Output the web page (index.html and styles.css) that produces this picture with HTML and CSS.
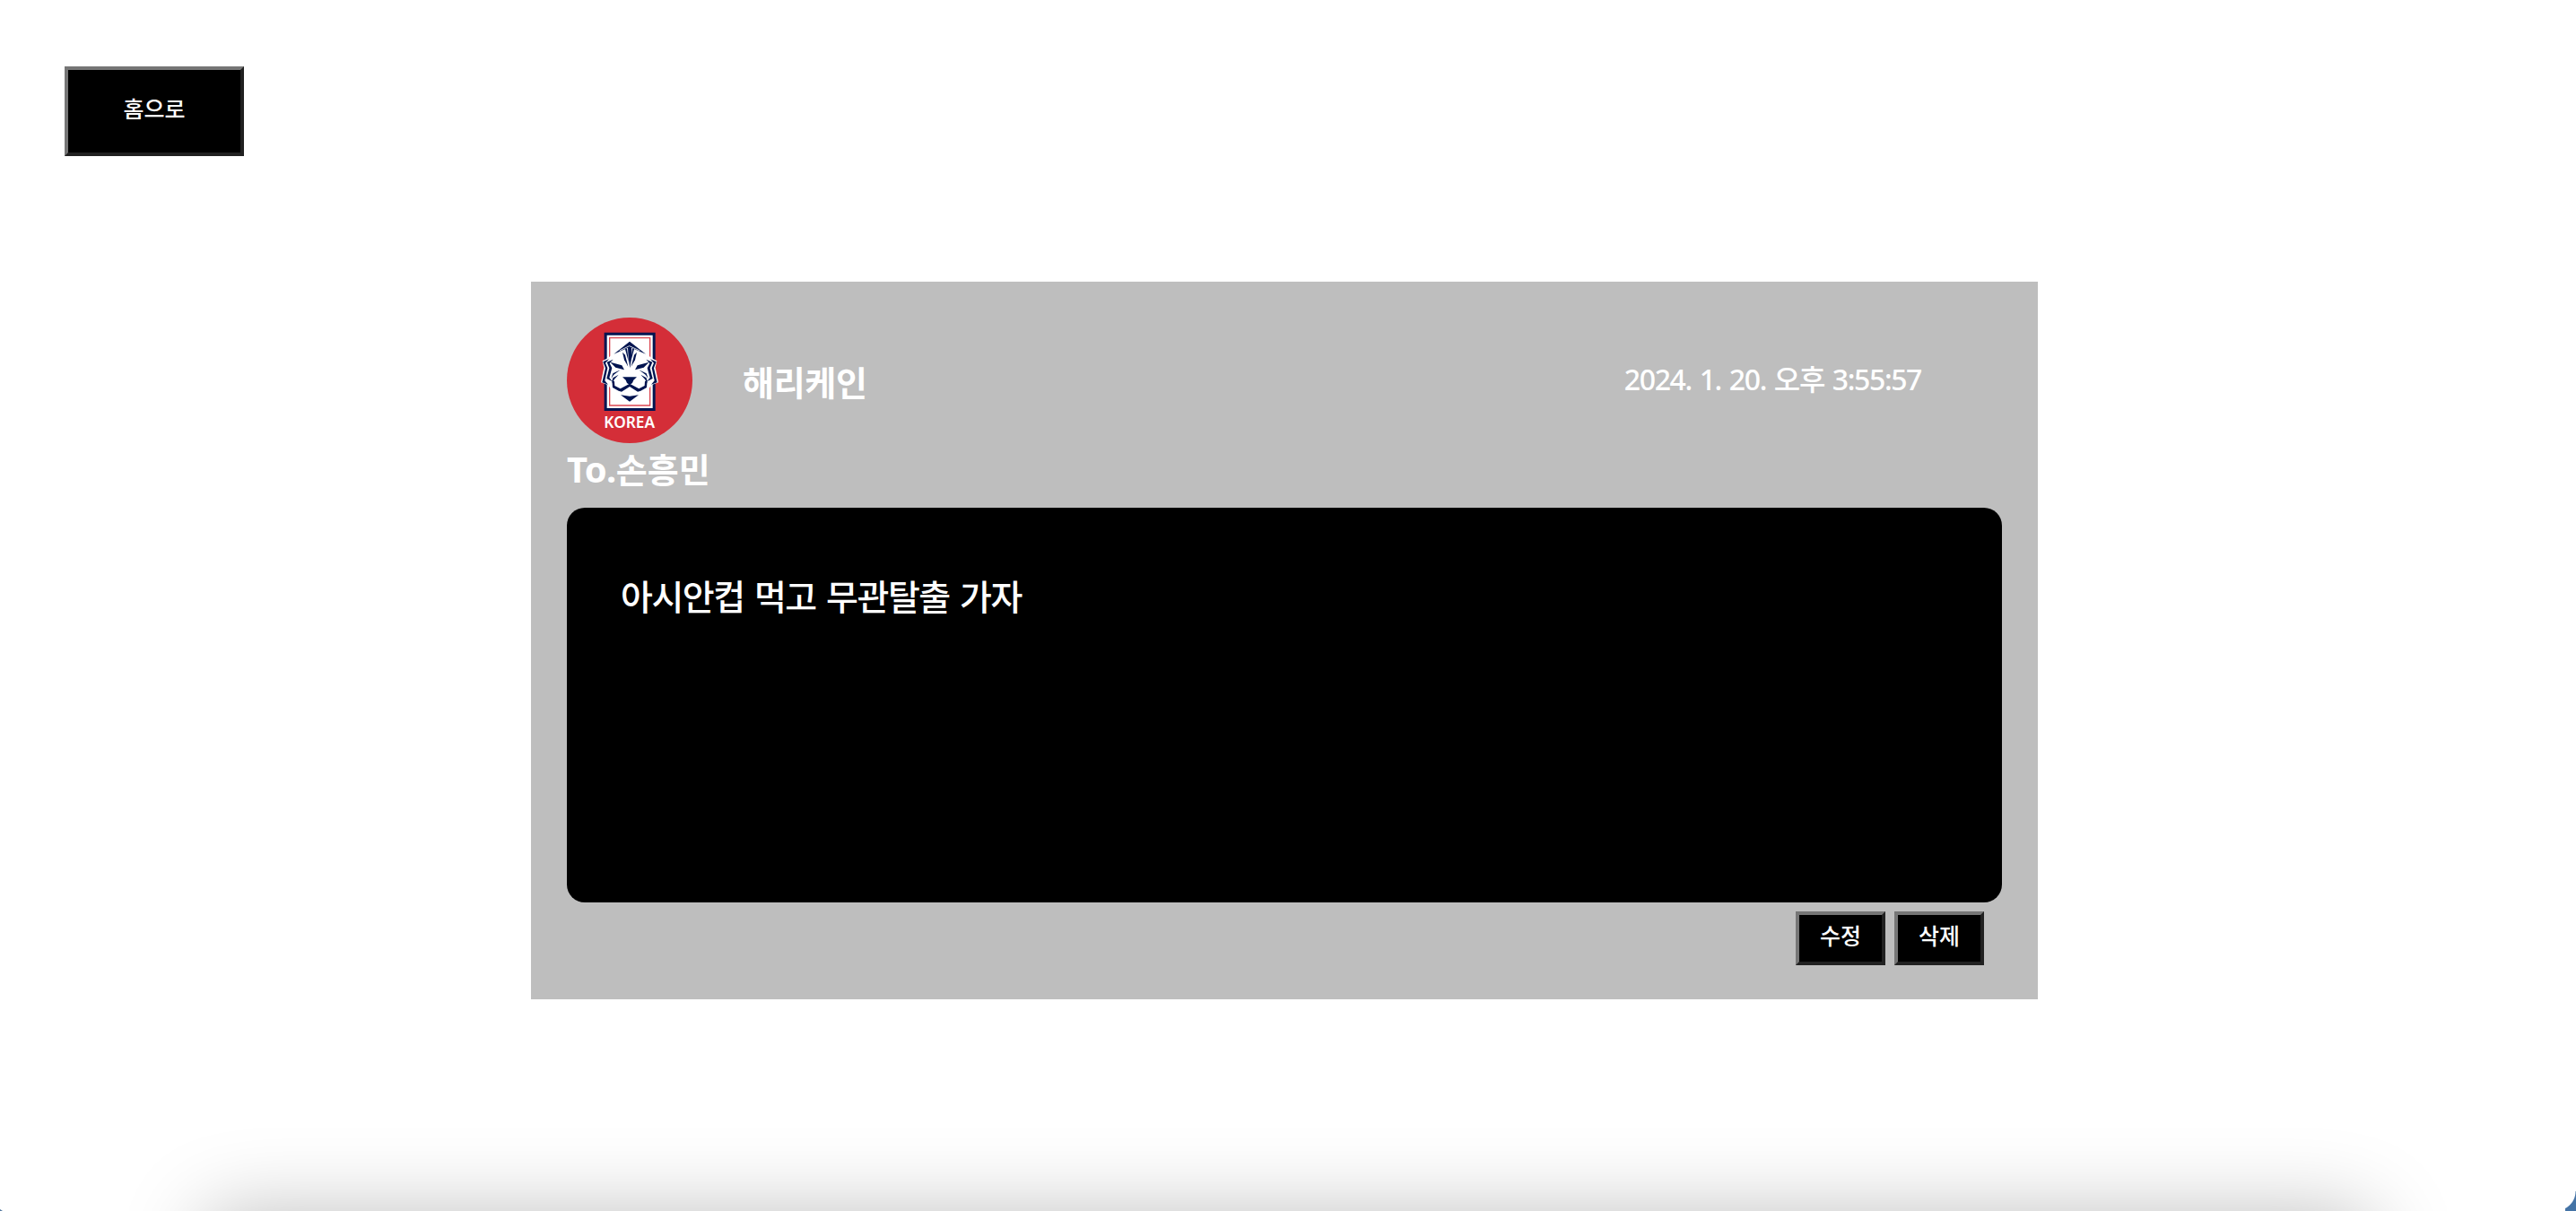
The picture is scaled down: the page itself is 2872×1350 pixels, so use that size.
FILE: index.html
```html
<!DOCTYPE html>
<html lang="ko">
<head>
<meta charset="utf-8">
<title>팬레터</title>
<link rel="stylesheet" href="styles.css">
</head>
<body>
<header class="top"><button class="btn btn-home">홈으로</button></header>
<main class="letter">
  <div class="letter-head">
    <svg class="avatar" viewBox="36 42 420 420">
      <circle cx="246" cy="252" r="210" fill="#d42e38"/>
      <path fill="#001450" d="M161 92H332V354H161z"/>
      <path fill="#fff" d="M170 101H323V345H170z"/>
      <path fill="none" stroke="#dc4650" stroke-width="4" d="M179 110H314V336H179z"/>
      <path fill="#fff" d="M246 117L298 160L319 177L337 187L332 209L342 259L319 268L303 290L246 329L190 290L174 268L150 259L160 209L155 187L174 177L194 160z"/>
      <g fill="#001450">
        <path d="M246 122L193 164L240 143L242 177L247 211L252 177L252 143L300 164z"/>
        <path fill="none" stroke="#fff" stroke-width="2.5" d="M212 153L245 137L280 153"/>
        <g id="half-face">
          <path d="M222 158L231 167L241 206L228 184z"/>
          <path d="M231 148L237 145L243 192z"/>
          <path d="M181 191L220 202L228 217L199 209z"/>
          <path d="M177 181L157 190L165 211L154 259L174 266L163 253L172 211L165 194z"/>
          <path d="M191 182L170 191L178 211L169 246L188 256L178 243L187 211L179 195z"/>
          <path d="M215 217L190 229L184 246L193 233zM209 233L190 244L187 262L195 248z"/>
          <path d="M222 241H246V267L237 261L233 251z"/>
          <path d="M187 250L195 256L196 270L215 280L246 263V273L219 290L209 287L189 276z"/>
          <path d="M216 301L246 305V323z"/>
        </g>
        <use href="#half-face" transform="matrix(-1 0 0 1 492 0)"/>
      </g>
      <text class="crest-name" x="160" y="411" textLength="170" lengthAdjust="spacingAndGlyphs">KOREA</text>
    </svg>
    <h2 class="sender">해리케인</h2>
    <time class="date">2024. 1. 20. 오후 3:55:57</time>
  </div>
  <h2 class="recipient">To.<span class="recipient-name">손흥민</span></h2>
  <p class="message">아시안컵 먹고 무관탈출 가자</p>
  <div class="actions">
    <button class="btn">수정</button>
    <button class="btn">삭제</button>
  </div>
</main>
<div class="bottom-edge">
  <div class="bottom-shade"></div>
  <div class="corner-left"></div>
  <div class="corner-right"></div>
</div>
</body>
</html>
```
FILE: styles.css
```css
* { box-sizing: border-box; }
html, body { height: 100%; }
body {
  position: relative;
  margin: 0;
  overflow: hidden;
  background: #fff;
  color: #fff;
  font-family: "Noto Sans", "Noto Sans CJK KR", sans-serif;
}
.top { padding: 74px 72px 140px; display: flex; }
.btn {
  width: 100px;
  height: 60px;
  padding: 0 0 8px;
  border: 4px solid;
  border-color: #767676 #212121 #212121 #767676;
  background: #000;
  color: #fff;
  font: 500 25px/1 "Noto Sans CJK KR", sans-serif;
}
.btn-home { width: 200px; height: 100px; }
.letter {
  width: 1680px;
  height: 800px;
  margin-left: 592px;
  padding: 40px;
  background: #bebebe;
}
.letter-head { display: flex; align-items: center; height: 140px; }
.avatar { width: 140px; height: 140px; }
.crest-name { font: 600 51px "Noto Sans", sans-serif; fill: #fff; }
.sender {
  margin: 4px 0 0 56px;
  font-size: 38px;
  line-height: 40px;
  letter-spacing: -0.3px;
}
.date {
  margin: -3px 90px 0 auto;
  font-size: 32px;
  font-weight: 500;
  line-height: 40px;
  letter-spacing: -1.4px;
  word-spacing: 2px;
}
.recipient {
  margin: 0;
  height: 72px;
  font-size: 40px;
  line-height: 58px;
  letter-spacing: -0.6px;
}
.recipient-name { font-size: 38px; letter-spacing: 0; }
.message {
  margin: 0;
  height: 440px;
  padding: 68px 60px;
  border-radius: 20px;
  background: #000;
  font: 500 39px/58px "Noto Sans CJK KR", sans-serif;
  letter-spacing: -1.5px;
  word-spacing: 2px;
}
.actions {
  display: flex;
  justify-content: flex-end;
  gap: 10px;
  padding: 10px 20px 0;
}
.bottom-edge {
  position: absolute;
  left: 0;
  right: 0;
  bottom: 0;
  height: 130px;
  overflow: hidden;
}
.bottom-shade {
  position: absolute;
  left: 226px;
  right: 226px;
  top: 131px;
  height: 300px;
  border-radius: 30px;
  box-shadow: 0 0 90px rgba(0, 0, 0, 0.25);
}
.corner-left {
  position: absolute;
  left: 0;
  bottom: 0;
  width: 3px;
  height: 2px;
  background: #53779f;
  clip-path: polygon(0 0, 100% 100%, 0 100%);
}
.corner-right {
  position: absolute;
  right: 0;
  bottom: 0;
  width: 12px;
  height: 22px;
  background: radial-gradient(circle at -10px 0, transparent 21px, #4574a6 22px);
}
```
